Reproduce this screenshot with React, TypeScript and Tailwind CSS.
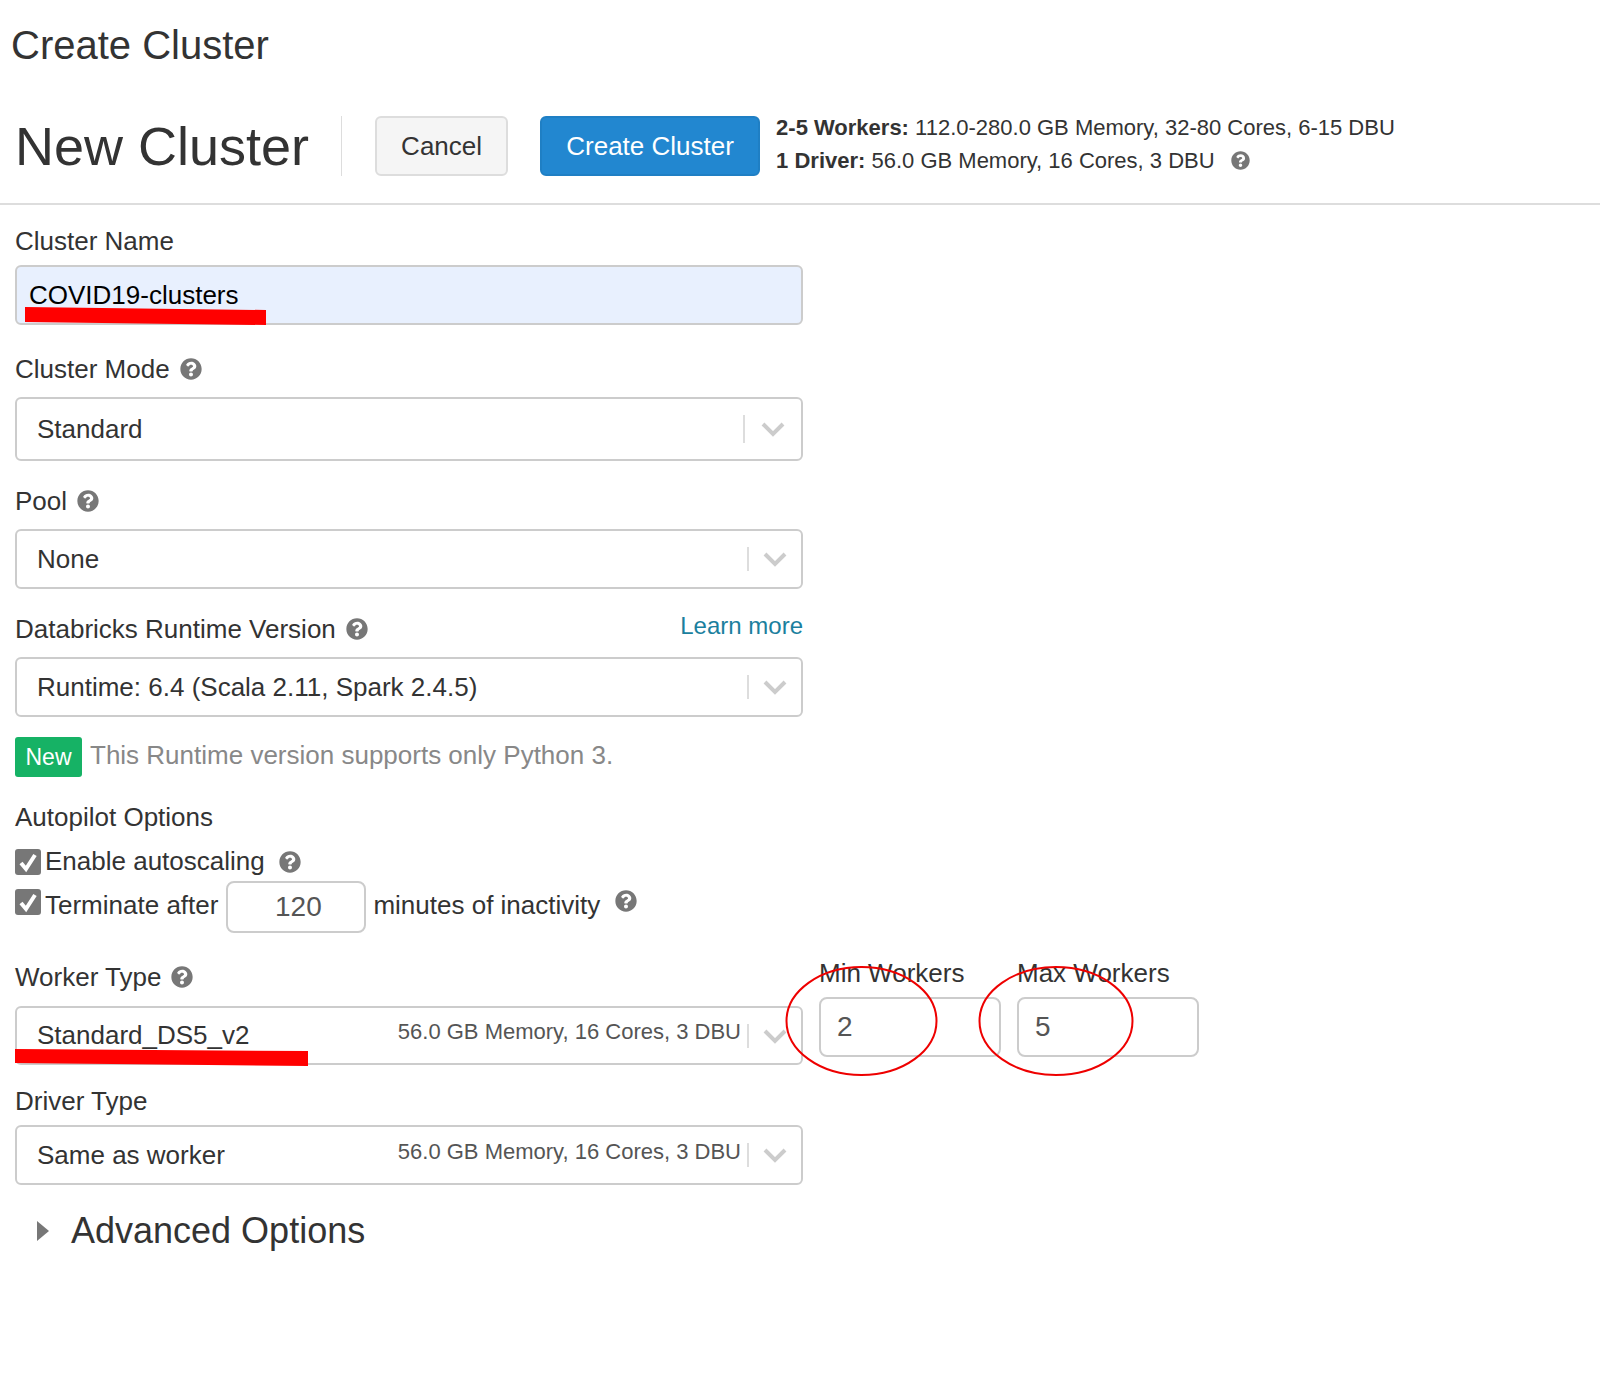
import React from 'react';
import { FaQuestionCircle } from 'react-icons/fa';

const Help = ({ className = '' }: { className?: string }) => (
  <FaQuestionCircle className={`inline-block shrink-0 text-[22px] text-[#777] ${className}`} />
);

const Checkbox = ({ className = '' }: { className?: string }) => (
  <span className={`flex h-[26px] w-[26px] shrink-0 items-center justify-center rounded-[3px] bg-[#777] ${className}`}>
    <svg viewBox="0 0 26 26" className="h-[26px] w-[26px]">
      <path d="M6 14 L11 20 L20 6" fill="none" stroke="#fff" strokeWidth="4" />
    </svg>
  </span>
);

type SelectProps = {
  value: string;
  height: string;
  detail?: string;
  tall?: boolean;
};

// react-select look: value on the left, thin separator + chevron on the right
const SelectBox = ({ value, height, detail, tall }: SelectProps) => (
  <div className={`flex w-[788px] items-center rounded-[6px] border-2 border-[#ccc] bg-white pl-[20px] ${height}`}>
    <span className="flex-1 text-[26px] text-[#333]">{value}</span>
    {detail && <span className="mb-[8px] mr-[6px] text-[22px] text-[#555]">{detail}</span>}
    <span className={tall ? 'h-[28px] w-[2px] bg-[#ddd]' : 'h-[24px] w-[2px] bg-[#ddd]'} />
    <svg viewBox="0 0 24 16" className={tall ? 'ml-[16px] mr-[16px] h-[16px] w-[24px]' : 'ml-[14px] mr-[14px] h-[16px] w-[24px]'}>
      <path d="M2 3 L12 13 L22 3" fill="none" stroke="#ccc" strokeWidth="4" />
    </svg>
  </div>
);

const Label = ({ children, className = '' }: { children: React.ReactNode; className?: string }) => (
  <div className={`flex h-[30px] items-center text-[26px] leading-[30px] text-[#333] ${className}`}>{children}</div>
);

const NumberBox = ({ value }: { value: string }) => (
  <input
    readOnly
    value={value}
    className="mt-[9px] h-[60px] rounded-[8px] border-2 border-[#ccc] bg-white pl-[16px] text-[28px] text-[#555] outline-none"
  />
);

const App = () => {
  const detail = '56.0 GB Memory, 16 Cores, 3 DBU';

  return (
    <div className="relative h-[1379px] w-full overflow-hidden bg-white font-['Liberation_Sans',Arial,sans-serif]">
      <h1 className="pl-[11px] pt-[22px] text-[40px] leading-[46px] text-[#333]">Create Cluster</h1>

      <div className="mt-[48px] flex h-[89px] items-start border-b-2 border-[#ddd] pl-[15px]">
        <div className="flex h-[60px] items-center">
          <span className="text-[54px] leading-[60px] text-[#333]">New Cluster</span>
          <span className="ml-[32px] h-[60px] w-[1px] bg-[#ddd]" />
          <button className="ml-[33px] h-[60px] w-[133px] rounded-[6px] border-2 border-[#ddd] bg-[#f5f5f5] text-[26px] text-[#333]">
            Cancel
          </button>
          <button className="ml-[32px] h-[60px] w-[220px] rounded-[6px] border-2 border-[#1f7fc4] bg-[#2287d0] text-[26px] text-white">
            Create Cluster
          </button>
          <div className="mb-[4px] ml-[16px] text-[22px] leading-[33px] text-[#333]">
            <div>
              <b>2-5 Workers:</b> 112.0-280.0 GB Memory, 32-80 Cores, 6-15 DBU
            </div>
            <div className="flex items-center">
              <span>
                <b>1 Driver:</b> 56.0 GB Memory, 16 Cores, 3 DBU
              </span>
              <Help className="ml-[16px] !text-[19px]" />
            </div>
          </div>
        </div>
      </div>

      <div className="px-[15px]">
        <Label className="mt-[21px]">Cluster Name</Label>
        <input
          readOnly
          value="COVID19-clusters"
          className="mt-[9px] h-[60px] w-[788px] rounded-[6px] border-2 border-[#ccc] bg-[#e8f0fe] pl-[12px] pt-[1px] text-[26px] text-black outline-none"
        />

        <Label className="mt-[29px]">
          Cluster Mode <Help className="ml-[10px]" />
        </Label>
        <div className="mt-[13px]">
          <SelectBox value="Standard" height="h-[64px]" tall />
        </div>

        <Label className="mt-[25px]">
          Pool <Help className="ml-[10px]" />
        </Label>
        <div className="mt-[13px]">
          <SelectBox value="None" height="h-[60px]" />
        </div>

        <div className="mt-[25px] flex h-[30px] w-[788px] items-center justify-between">
          <Label>
            Databricks Runtime Version <Help className="ml-[10px]" />
          </Label>
          <a className="mb-[6px] text-[24px] leading-[30px] text-[#1b7f9e]">Learn more</a>
        </div>
        <div className="mt-[13px]">
          <SelectBox value="Runtime: 6.4 (Scala 2.11, Spark 2.4.5)" height="h-[60px]" />
        </div>

        <div className="mt-[20px] flex h-[40px] items-center">
          <span className="flex h-[40px] w-[67px] items-center justify-center rounded-[3px] bg-[#16b265] text-[23px] text-white">
            New
          </span>
          <span className="mb-[4px] ml-[8px] text-[26px] text-[#888]">This Runtime version supports only Python 3.</span>
        </div>

        <Label className="mt-[25px]">Autopilot Options</Label>

        <div className="mt-[17px] flex h-[26px] items-center text-[26px] text-[#333]">
          <Checkbox />
          <span className="mb-[2px] ml-[4px]">Enable autoscaling</span>
          <Help className="ml-[14px]" />
        </div>

        <div className="mt-[6px] flex h-[52px] items-start text-[26px] text-[#333]">
          <Checkbox className="mt-[8px]" />
          <span className="ml-[4px] mt-[9px] leading-[30px]">Terminate after</span>
          <input
            readOnly
            value="120"
            className="ml-[8px] h-[52px] w-[140px] rounded-[8px] border-2 border-[#ccc] bg-white pl-[4px] text-center text-[28px] text-[#555] outline-none"
          />
          <span className="ml-[7px] mt-[9px] leading-[30px]">minutes of inactivity</span>
          <Help className="ml-[15px] mt-[9px]" />
        </div>

        <div className="mt-[25px] flex items-start">
          <div className="w-[788px]">
            <Label className="mt-[4px]">
              Worker Type <Help className="ml-[10px]" />
            </Label>
            <div className="mt-[14px]">
              <SelectBox value="Standard_DS5_v2" height="h-[59px]" detail={detail} />
            </div>
          </div>
          <div className="ml-[16px] flex w-[182px] flex-col">
            <Label>Min Workers</Label>
            <NumberBox value="2" />
          </div>
          <div className="ml-[16px] flex w-[182px] flex-col">
            <Label>Max Workers</Label>
            <NumberBox value="5" />
          </div>
        </div>

        <Label className="mt-[21px]">Driver Type</Label>
        <div className="mt-[9px]">
          <SelectBox value="Same as worker" height="h-[60px]" detail={detail} />
        </div>

        <div className="mt-[24px] flex h-[44px] items-center pl-[22px] text-[36px] leading-[44px] text-[#333]">
          <svg viewBox="0 0 12 20" className="h-[20px] w-[12px]">
            <path d="M0 0 L12 10 L0 20 Z" fill="#777" />
          </svg>
          <span className="ml-[22px]">Advanced Options</span>
        </div>
      </div>

      {/* red marks someone drew over the screenshot */}
      <svg className="pointer-events-none absolute left-0 top-0 h-[1379px] w-[1600px]" viewBox="0 0 1600 1379">
        <polygon points="25,307 266,310 266,325 25,322" fill="#ff0000" />
        <polygon points="15,1049 308,1051 308,1066 15,1063" fill="#ff0000" />
        <ellipse cx="861.5" cy="1021" rx="75" ry="54" fill="none" stroke="#ee0000" strokeWidth="2" />
        <ellipse cx="1056" cy="1021" rx="76.5" ry="54" fill="none" stroke="#ee0000" strokeWidth="2" />
      </svg>
    </div>
  );
};

export default App;
